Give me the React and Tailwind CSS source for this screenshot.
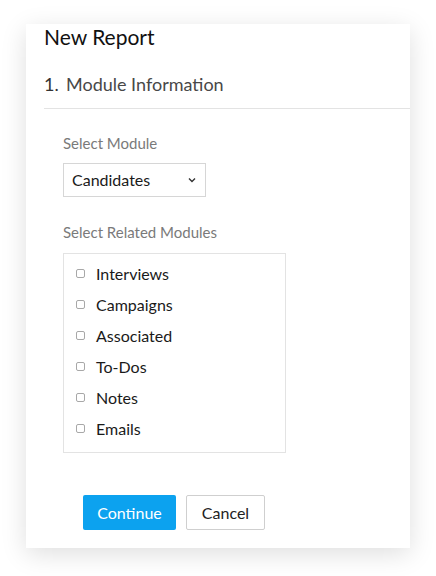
import React from 'react';

const related = ['Interviews', 'Campaigns', 'Associated', 'To-Dos', 'Notes', 'Emails'];

export default function App() {
  return (
    <div className="min-h-[576px] w-[436px] bg-white pt-[24px] pl-[26px]" style={{ fontFamily: 'Lato, "Open Sans", Arial, sans-serif' }}>
      <div className="w-[384px] h-[524px] bg-white shadow-[0_6px_24px_rgba(0,0,0,0.13)]">
        {/* header */}
        <div className="pl-[18px]">
          <h1 className="text-[21px] leading-[26px] text-[#111]">New Report</h1>
          <div className="mt-[22px] flex items-center h-[24px] text-[18px] text-[#484848]">
            <span className="w-[22px] text-[#333]">1.</span>
            <span>Module Information</span>
          </div>
          <div className="mt-[12px] h-px bg-[#e3e3e3]" />
        </div>

        {/* body */}
        <div className="pl-[37px] pt-[25px]">
          <div className="text-[15px] leading-[18px] text-[#7a7a7a]">Select Module</div>
          <div className="mt-[11px] w-[143px] h-[34px] border border-[#d6d6d6] flex items-center justify-between pl-[8px] pr-[8px]">
            <span className="text-[16px] text-[#1a1a1a]">Candidates</span>
            <svg width="8" height="6" viewBox="0 0 8 6" className="mr-[1px]">
              <path d="M1 1.5 L4 4.5 L7 1.5" fill="none" stroke="#333" strokeWidth="1.4" />
            </svg>
          </div>

          <div className="mt-[26px] text-[15px] leading-[18px] text-[#7a7a7a]">Select Related Modules</div>
          <div className="mt-[12px] w-[223px] h-[200px] border border-[#e3e3e3] pt-[4px] pl-[12px]">
            {related.map((r) => (
              <div key={r} className="flex items-center h-[31px]">
                <span className="w-[9px] h-[9px] rounded-[2px] border border-[#a8a8a8] bg-white" />
                <span className="ml-[11px] text-[16px] text-[#1a1a1a]">{r}</span>
              </div>
            ))}
          </div>

          <div className="mt-[42px] ml-[20px] flex gap-[10px]">
            <button className="w-[93px] h-[35px] rounded-[2px] bg-[#0ca2ef] text-white text-[16px]">Continue</button>
            <button className="w-[79px] h-[35px] rounded-[2px] border border-[#cfcfcf] bg-white text-[#222] text-[16px]">Cancel</button>
          </div>
        </div>
      </div>
    </div>
  );
}
